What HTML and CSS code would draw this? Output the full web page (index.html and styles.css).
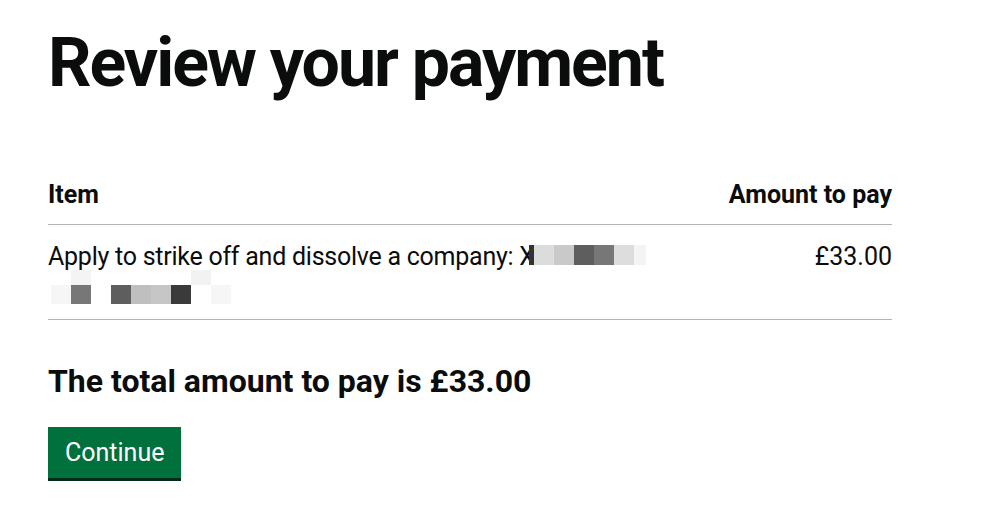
FILE: index.html
```
<!DOCTYPE html>
<html lang="en">
<head>
<meta charset="utf-8">
<title>Review your payment</title>
<link rel="stylesheet" href="styles.css">
</head>
<body>
<main class="main">
<h1 class="heading-xl">Review your payment</h1>

<table class="table">
<thead>
<tr>
<th class="cell">Item</th>
<th class="cell cell-num">Amount to pay</th>
</tr>
</thead>
<tbody>
<tr>
<td class="cell cell-item">Apply to strike off and dissolve a company: X<span class="blur blur-a"><i style="background:#dcdcdc"></i><i style="background:#c9c9c9"></i><i style="background:#5e5e5e"></i><i style="background:#777"></i><i style="background:#dddddd"></i><i class="half" style="background:#f4f4f4"></i></span>
<span class="blur blur-b">
<span class="blur-row"><i></i><i style="background:#f4f4f4"></i><i></i><i></i><i></i><i></i><i></i><i style="background:#f2f2f2"></i><i></i></span>
<span class="blur-row"><i style="background:#f6f6f6"></i><i style="background:#777"></i><i></i><i style="background:#5e5e5e"></i><i style="background:#bfbfbf"></i><i style="background:#c6c6c6"></i><i style="background:#3a3a3a"></i><i></i><i style="background:#f6f6f6"></i></span>
</span></td>
<td class="cell cell-num">£33.00</td>
</tr>
</tbody>
</table>

<h2 class="heading-m">The total amount to pay is £33.00</h2>

<button class="button" type="submit">Continue</button>
</main>
</body>
</html>
```

FILE: styles.css
```
/* Review payment page */

body
{ margin: 0;
background: #fff;
color: #0b0c0c;
font-family: Roboto, "Liberation Sans", sans-serif;
}

.main
{ padding: 18px 108px 40px 48px;
}

.heading-xl
{ margin: 0 0 56px 0;
font-size: 68px;
line-height: 90px;
font-weight: 700;
letter-spacing: -2px;
}

.heading-m
{ margin: 41px 0 26px 0;
font-size: 32px;
line-height: 40px;
font-weight: 700;
}

/* Table */

.table
{ width: 100%;
border-collapse: collapse;
font-size: 25px;
}

.cell
{ text-align: left;
vertical-align: top;
padding: 13px 0 11px 0;
border-bottom: 1px solid #b1b4b6;
line-height: 36px;
}

th.cell
{ font-weight: 700;
}

td.cell
{ font-weight: 400;
padding: 14px 0 15px 0;
}

.cell-item
{ letter-spacing: -0.25px;
}

.cell-num
{ text-align: right;
}

/* Redacted company details */

.blur
{ display: inline-block;
vertical-align: top;
}

.blur-a
{ margin: 6px 0 0 -6px;
height: 20px;
border-left: 5px solid #333;
}

.blur i
{ display: inline-block;
vertical-align: top;
width: 20px;
height: 20px;
}

.blur i.half
{ width: 12px;
}

.blur-b
{ display: block;
margin: -5px 0 0 3px;
}

.blur-row
{ display: flex;
height: 15px;
}

.blur-row + .blur-row
{ height: 19px;
}

.blur-row i
{ height: 100%;
}

/* Button */

.button
{ margin: 0;
padding: 11px 17px 11px 17px;
border: 0;
background: #00703c;
box-shadow: 0 3px 0 #002d18;
color: #fff;
font-family: inherit;
font-size: 25px;
line-height: 29px;
cursor: pointer;
}
```
